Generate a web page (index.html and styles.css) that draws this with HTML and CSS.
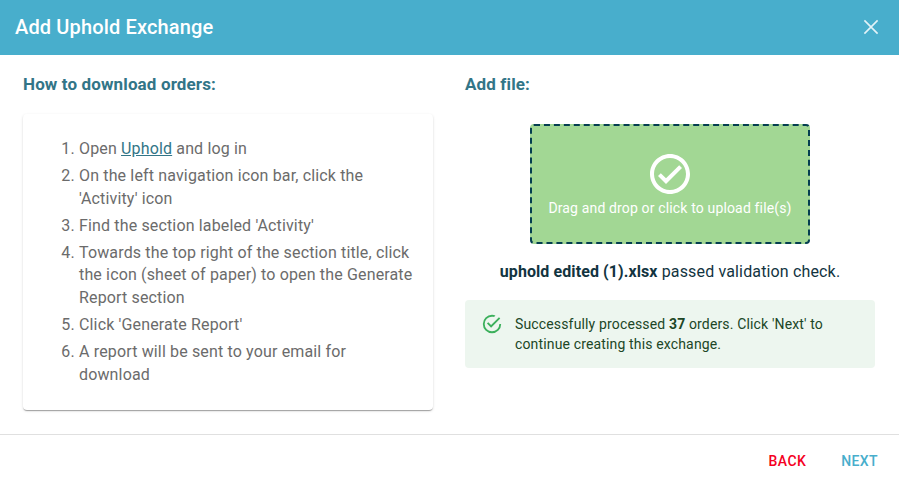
FILE: index.html
```html
<!DOCTYPE html>
<html lang="en">
<head>
  <meta charset="UTF-8">
  <title>Add Uphold Exchange</title>
  <link rel="stylesheet" href="styles.css">
</head>
<body>

  <div class="dialog">
    <header class="dialog-header">
      <h1>Add Uphold Exchange</h1>
      <button class="close-button" aria-label="Close">
        <svg width="16" height="16" viewBox="0 0 16 16" fill="none" stroke="#fff" stroke-opacity="0.85" stroke-width="1.6">
          <path d="M1.4 1.4l13.2 13.2M14.6 1.4L1.4 14.6"/>
        </svg>
      </button>
    </header>

    <main class="dialog-body">
      <section>
        <h2>How to download orders:</h2>
        <div class="card">
          <ol>
            <li>Open <a href="#">Uphold</a> and log in</li>
            <li>On the left navigation icon bar, click the 'Activity' icon</li>
            <li>Find the section labeled 'Activity'</li>
            <li>Towards the top right of the section title, click the icon (sheet of paper) to open the Generate Report section</li>
            <li>Click 'Generate Report'</li>
            <li>A report will be sent to your email for download</li>
          </ol>
        </div>
      </section>

      <section>
        <h2>Add file:</h2>
        <div class="dropzone">
          <svg width="48" height="48" viewBox="0 0 24 24" fill="#fff">
            <path d="M12 2C6.48 2 2 6.48 2 12s4.48 10 10 10 10-4.48 10-10S17.52 2 12 2zm0 18c-4.41 0-8-3.59-8-8s3.59-8 8-8 8 3.59 8 8-3.59 8-8 8zm4.59-12.42L10 14.17l-2.59-2.58L6 13l4 4 8-8z"/>
          </svg>
          <span>Drag and drop or click to upload file(s)</span>
        </div>
        <p class="file-status"><strong>uphold edited (1).xlsx</strong> passed validation check.</p>
        <div class="alert">
          <svg width="22" height="22" viewBox="0 0 24 24" fill="#3cb05c">
            <path d="M20,12A8,8 0 0,1 12,20A8,8 0 0,1 4,12A8,8 0 0,1 12,4C12.76,4 13.5,4.11 14.2,4.31L15.77,2.74C14.61,2.26 13.34,2 12,2A10,10 0 0,0 2,12A10,10 0 0,0 12,22A10,10 0 0,0 22,12M7.91,10.08L6.5,11.5L11,16L21,6L19.59,4.58L11,13.17L7.91,10.08Z"/>
          </svg>
          <p>Successfully processed <strong>37</strong> orders. Click 'Next' to continue creating this exchange.</p>
        </div>
      </section>
    </main>

    <footer class="dialog-footer">
      <button class="back">Back</button>
      <button class="next">Next</button>
    </footer>
  </div>

</body>
</html>
```
FILE: styles.css
```css
* {
  box-sizing: border-box;
}

body {
  margin: 0;
  background-color: #fff;
  font-family: Roboto, sans-serif;
}

h1, h2, p {
  margin: 0;
}

button {
  background: none;
  border: none;
  padding: 0;
  cursor: pointer;
  font-family: inherit;
}

.dialog {
  display: flex;
  flex-direction: column;
  height: 100vh;
}

.dialog-header {
  display: flex;
  justify-content: space-between;
  align-items: center;
  height: 55px;
  padding: 0 20px 0 15px;
  background-color: #48aecc;
}

.dialog-header h1 {
  padding-bottom: 2px;
  color: #fff;
  font-size: 20px;
  font-weight: 500;
  letter-spacing: 0.15px;
}

.close-button {
  display: flex;
  padding-bottom: 1px;
}

.dialog-body {
  flex: 1;
  display: grid;
  grid-template-columns: 410px 410px;
  column-gap: 32px;
  padding: 17px 23px 0;
}

h2 {
  color: #327587;
  font-size: 17px;
  font-weight: 700;
  line-height: 24px;
  letter-spacing: 0.13px;
}

.card {
  height: 296px;
  margin-top: 18px;
  padding: 24px 16px 0;
  border-radius: 4px;
  box-shadow: 0 2px 1px -1px rgba(0,0,0,0.2), 0 1px 1px rgba(0,0,0,0.14), 0 1px 3px rgba(0,0,0,0.12);
}

.card ol {
  margin: 0;
  padding-left: 40px;
  color: #6b6b6b;
  font-size: 16px;
  line-height: 22.88px;
  letter-spacing: 0.15px;
}

.card li {
  margin-bottom: 4px;
}

.card a {
  color: #327587;
}

.dropzone {
  display: flex;
  flex-direction: column;
  justify-content: center;
  align-items: center;
  width: 280px;
  height: 120px;
  margin: 28px auto 0;
  border: 2px dashed #043e50;
  border-radius: 4px;
  background-color: #a2d794;
  color: #fff;
  font-size: 14px;
  line-height: 20px;
  letter-spacing: 0.15px;
}

.file-status {
  margin-top: 16px;
  color: #12343f;
  font-size: 16px;
  line-height: 24px;
  letter-spacing: 0.15px;
  text-align: center;
}

.file-status strong {
  letter-spacing: 0.09px;
}

.alert {
  display: flex;
  gap: 12px;
  height: 68px;
  margin-top: 16px;
  padding: 14px 16px;
  border-radius: 4px;
  background-color: #edf6ef;
  color: #204626;
  font-size: 14px;
  line-height: 20px;
  letter-spacing: 0.15px;
}

.alert svg {
  flex-shrink: 0;
  margin-top: -1px;
}

.dialog-footer {
  display: flex;
  justify-content: flex-end;
  align-items: center;
  gap: 35px;
  height: 52px;
  padding: 1px 21px 0 0;
  border-top: 1px solid #e0e0e0;
}

.dialog-footer button {
  font-size: 14px;
  font-weight: 500;
  letter-spacing: 0.4px;
  text-transform: uppercase;
}

.dialog-footer .back {
  color: #f50023;
}

.dialog-footer .next {
  color: #48aecc;
}
```
